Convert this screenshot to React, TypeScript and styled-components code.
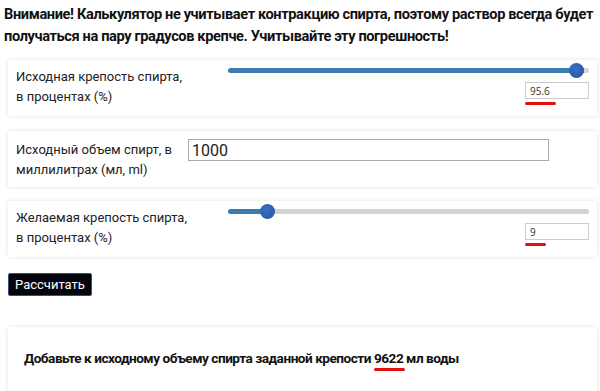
import React, { useState } from 'react';
import styled, { createGlobalStyle } from 'styled-components';

// ─── Global ──────────────────────────────────────────────────────────────────

const GlobalStyle = createGlobalStyle`
  html, body {
    margin: 0;
    padding: 0;
    background: #fff;
  }
  body {
    font-family: Roboto, 'Liberation Sans', Arial, sans-serif;
    color: #222;
  }
`;

// ─── Styled components ───────────────────────────────────────────────────────

const Page = styled.div`
  padding: 3px 3px 0 8px;
  width: 589px;
`;
const Warning = styled.div`
  font-size: 14.6px;
  font-weight: 700;
  line-height: 22px;
  letter-spacing: -0.38px;
  color: #111;
  margin-left: -4px;
  margin-bottom: 13px;
`;
const Card = styled.div<{ $gap: number; $top: number }>`
  box-sizing: border-box;
  display: flex;
  min-height: 56px;
  background: #fff;
  box-shadow: 0 0 4px rgba(0, 0, 0, 0.12);
  padding: ${({ $top }) => $top}px 8px 6px;
  margin-bottom: ${({ $gap }) => $gap}px;
`;
const Label = styled.div<{ $width: number; $top: number }>`
  width: ${({ $width }) => $width}px;
  flex-shrink: 0;
  font-size: 13px;
  line-height: 20px;
  padding-top: ${({ $top }) => $top}px;
  color: #222;
`;
const Control = styled.div`
  flex: 1;
  display: flex;
  flex-direction: column;
  align-items: flex-end;
`;
const Range = styled.input`
  -webkit-appearance: none;
  appearance: none;
  width: 100%;
  height: 5px;
  margin: 4px 0 9px;
  border-radius: 3px;
  outline: none;
  &::-webkit-slider-thumb {
    -webkit-appearance: none;
    width: 15px;
    height: 15px;
    border-radius: 50%;
    background: radial-gradient(circle at 40% 35%, #3b6fc0, #2553a0);
    cursor: pointer;
  }
`;
const ValueWrap = styled.div`
  display: flex;
  flex-direction: column;
  width: 64px;
`;
const SmallInput = styled.input`
  box-sizing: border-box;
  width: 64px;
  height: 17px;
  border: 1px solid #ccc;
  padding: 0 4px;
  font-family: 'Open Sans', Roboto, sans-serif;
  font-size: 10px;
  color: #333;
  outline: none;
`;
const Underline = styled.div<{ $width: number }>`
  width: ${({ $width }) => $width}px;
  height: 3px;
  border-radius: 2px;
  background: #e01010;
  margin-top: 3px;
`;
const BigInput = styled.input`
  box-sizing: border-box;
  width: 361px;
  height: 22px;
  border: 1px solid #aaa;
  padding: 0 3px;
  font-family: Roboto, sans-serif;
  font-size: 16px;
  color: #222;
  outline: none;
`;
const Button = styled.button`
  display: block;
  height: 23px;
  padding: 0 6px;
  background: #05050f;
  color: #fff;
  border: 1px solid #3a4d80;
  border-radius: 2px;
  font-family: Roboto, sans-serif;
  font-size: 13px;
  cursor: pointer;
  margin-bottom: 31px;
`;
const Result = styled.div`
  background: #fff;
  box-shadow: 0 0 4px rgba(0, 0, 0, 0.12);
  padding: 23px 16px 30px;
  font-size: 13.6px;
  font-weight: 700;
  letter-spacing: -0.48px;
  color: #111;
`;
const Mark = styled.span`
  position: relative;
  &::after {
    content: '';
    position: absolute;
    left: 0;
    right: -2px;
    bottom: -5px;
    height: 3px;
    border-radius: 2px;
    background: #e01010;
  }
`;

// ─── Parts ───────────────────────────────────────────────────────────────────

const trackBg = (v: number, max: number) => {
  const p = (v / max) * 100;
  return `linear-gradient(to right, #3b7bb0 0%, #3b7bb0 ${p}%, #d3d3d3 ${p}%, #d3d3d3 100%)`;
};

function SliderField({ label, value, max, mark, gap, onChange }: { label: React.ReactNode; value: number; max: number; mark: number; gap: number; onChange: (v: number) => void }) {
  return (
    <Card $gap={gap} $top={4}>
      <Label $width={212} $top={3}>
        {label}
      </Label>
      <Control>
        <Range type="range" min={0} max={max} step={0.1} value={value} style={{ background: trackBg(value, max) }} onChange={(e) => onChange(Number(e.target.value))} />
        <ValueWrap>
          <SmallInput value={String(value)} onChange={(e) => onChange(Number(e.target.value) || 0)} />
          <Underline $width={mark} />
        </ValueWrap>
      </Control>
    </Card>
  );
}

// ─── App ─────────────────────────────────────────────────────────────────────

export default function App() {
  const [start, setStart] = useState(95.6);
  const [volume, setVolume] = useState('1000');
  const [target, setTarget] = useState(9);

  return (
    <>
      <GlobalStyle />
      <Page>
        <Warning>
          Внимание! Калькулятор не учитывает контракцию спирта, поэтому раствор всегда будет получаться на пару градусов крепче. Учитывайте эту погрешность!
        </Warning>

        <SliderField
          label={
            <>
              Исходная крепость спирта,
              <br />в процентах (%)
            </>
          }
          value={start}
          max={97}
          mark={31}
          gap={15}
          onChange={setStart}
        />

        <Card $gap={14} $top={8}>
          <Label $width={172} $top={1}>
            Исходный объем спирт, в
            <br />
            миллилитрах (мл, ml)
          </Label>
          <BigInput value={volume} onChange={(e) => setVolume(e.target.value)} />
        </Card>

        <SliderField
          label={
            <>
              Желаемая крепость спирта,
              <br />в процентах (%)
            </>
          }
          value={target}
          max={97}
          mark={21}
          gap={16}
          onChange={setTarget}
        />

        <Button>Рассчитать</Button>

        <Result>
          Добавьте к исходному объему спирта заданной крепости <Mark>9622</Mark> мл воды
        </Result>
      </Page>
    </>
  );
}
